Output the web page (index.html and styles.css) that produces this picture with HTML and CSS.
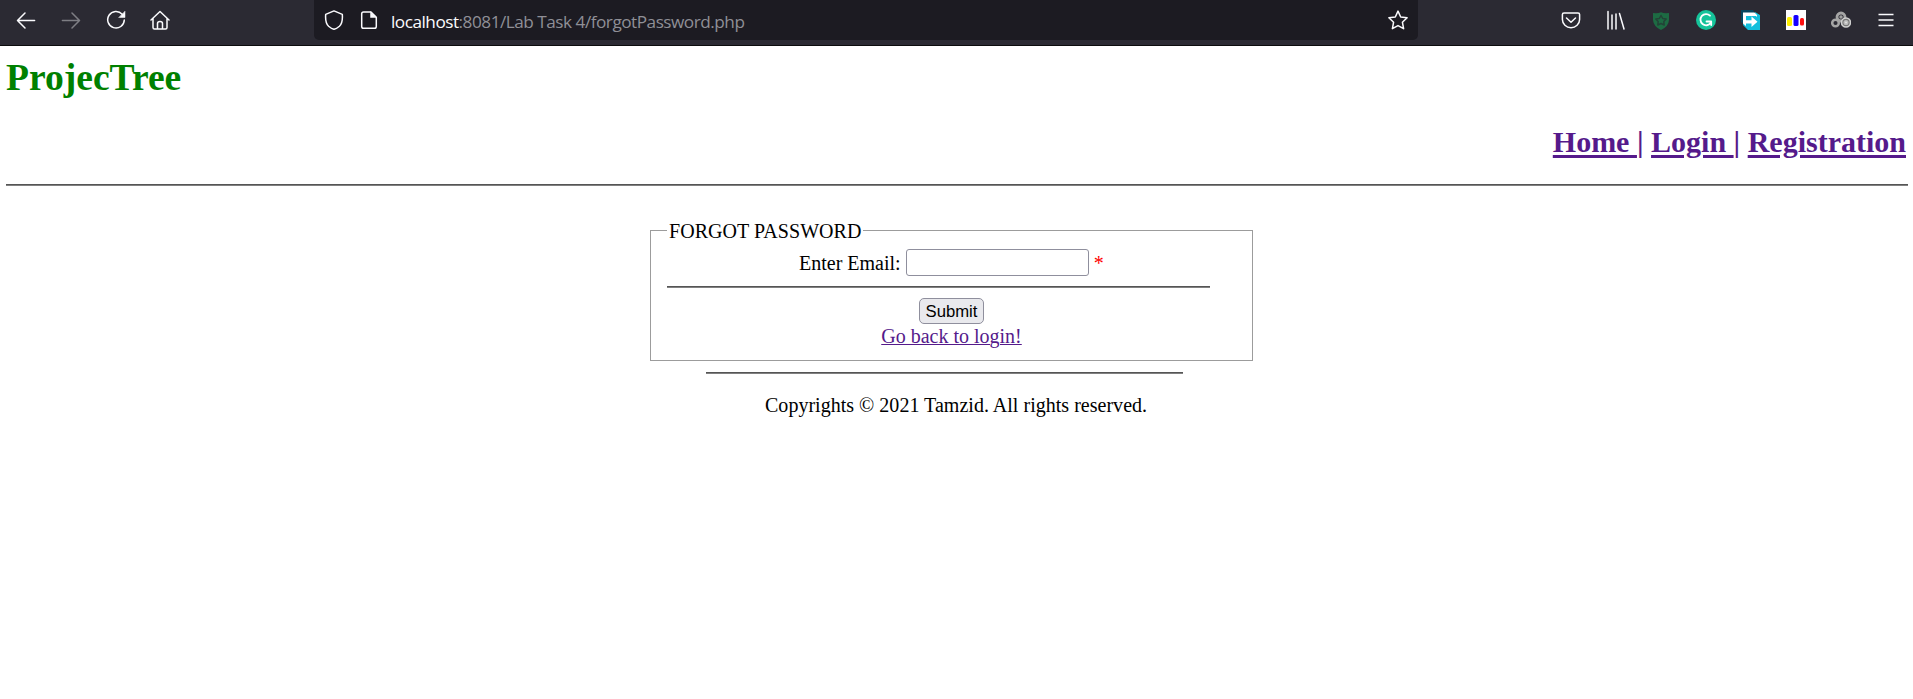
FILE: index.html
```html
<!DOCTYPE html>
<html lang="en">
<head>
<meta charset="utf-8">
<title>Forgot Password</title>
<link rel="stylesheet" href="styles.css">
</head>
<body>
<header class="toolbar">
  <div class="nav-icons">
    <svg class="icon" viewBox="0 0 20 20"><path d="M18.6 10.5H1.6M9 3L1.5 10.5L9 18"/></svg>
    <svg class="icon disabled" viewBox="0 0 20 20"><path d="M1.4 10.5H18.4M11 3L18.500 10.500L11 18"/></svg>
    <svg class="icon" viewBox="0 0 20 20"><path d="M16.200 4.200A8.300 8.300 0 1 0 18.300 10"/><path class="solid" d="M19 1.500V7.500H13Z"/></svg>
    <svg class="icon home" viewBox="0 0 20 20"><path d="M1 10L10 1.500L19 10M3 8.500V17.500Q3 19 4.500 19H15.500Q17 19 17 17.500V8.500M7.500 19V13.500Q7.500 11.500 10 11.500Q12.500 11.500 12.500 13.500V19"/></svg>
  </div>
  <div class="address">
    <svg class="icon" viewBox="0 0 20 20"><path d="M10 .9L18.300 4.400Q19 13 15.400 16.300Q12.500 18.800 10 19.300Q7.500 18.800 4.600 16.300Q1 13 1.700 4.400Z"/></svg>
    <svg class="icon page" viewBox="0 0 20 20"><path d="M4.500 2H12L17.300 7.200V16.500Q17.300 18.300 15.500 18.300H4.500Q2.700 18.300 2.700 16.500V3.800Q2.700 2 4.500 2Z"/><path class="solid" d="M11.500 2V7.500H17.300Z"/></svg>
    <div class="url"><span class="host">localhost</span>:8081/Lab Task 4/forgotPassword.php</div>
    <svg class="icon star" viewBox="0 0 20 20"><path d="M10 1.100L12.700 7L19.100 7.800L14.400 12.200L15.600 18.700L10 15.600L4.400 18.700L5.600 12.200L.9 7.800L7.300 7Z"/></svg>
  </div>
  <div class="ext-icons">
    <svg class="icon" viewBox="0 0 20 20"><path d="M3 3H17Q18.600 3 18.600 4.600V9.500A8.600 8.200 0 0 1 1.400 9.500V4.600Q1.400 3 3 3ZM5.500 8L10 12.300L14.500 8"/></svg>
    <svg class="icon" viewBox="0 0 20 20"><path d="M2 1.500V19M6 5V19M10 4V19M13.500 3.500L18 19"/></svg>
    <svg class="icon" viewBox="0 0 20 20"><path fill="#1d6b43" stroke="none" d="M2 3Q7 3.500 10 2.300Q13 3.500 18 3V10Q17.500 16.500 10 20Q2.500 16.500 2 10Z"/><path stroke="#234337" d="M10 5.500L11.700 8.500L15.200 9L12.800 11.500L13.200 15L10 13.500L6.800 15L7.200 11.500L4.800 9L8.300 8.500Z"/></svg>
    <svg class="icon" viewBox="0 0 20 20"><circle cx="10" cy="10" r="10" fill="#15c39a" stroke="none"/><path stroke="#fff" stroke-width="1.800" d="M14 5.700A5.600 5.600 0 1 0 14.600 13M10.500 11.500H15.200V15"/></svg>
    <svg class="icon" viewBox="0 0 20 20"><path fill="#06465f" stroke="none" d="M0 0H12L14 3H3V14L0 12Z"/><path fill="#12bfdc" stroke="none" d="M14 2L19 5V20H7L2 15V12H14Z"/><path fill="#fff" stroke="none" d="M2 2.500H13.500L16 5V7H5V16L2 13.500Z"/><path fill="#12bfdc" stroke="none" d="M5 6H15L18 9V17H5Z"/><path fill="#fff" stroke="none" d="M5 10.200H10.500V6.500L16.500 11.800L10.500 17V13.500H5Z"/></svg>
    <svg class="icon" viewBox="0 0 20 20"><path fill="#fff" stroke="none" d="M0 0H20V20H0Z"/><rect x="1" y="7" width="5" height="9" rx="1.500" fill="#fff000" stroke="none"/><rect x="7.500" y="5" width="5" height="11" rx="1.500" fill="#1500ff" stroke="none"/><rect x="14" y="8" width="4" height="7.500" rx="1.500" fill="#ff1010" stroke="none"/></svg>
    <svg class="icon" viewBox="0 0 20 20"><g stroke="#a5a5a5"><circle cx="10" cy="7" r="4" stroke-width="2.800"/><circle cx="10" cy="7" r="1"/><circle cx="4.500" cy="13" r="3.300" stroke-width="2.500"/></g><circle cx="15" cy="12.500" r="4.500" fill="#777" stroke="#d0d0d0" stroke-width="1.600"/><circle cx="15" cy="12.500" r="1.800" fill="#ddd" stroke="#bbb"/></svg>
    <svg class="icon menu" viewBox="0 0 20 20"><path d="M2.500 4.500H17.500M2.500 10H17.500M2.500 15.500H17.500"/></svg>
  </div>
</header>
<main class="content">
  <h1 class="brand">ProjecTree</h1>
  <nav class="links"><a href="#">Home </a><span class="bar">|</span> <a href="#">Login </a><span class="bar">|</span> <a href="#">Registration</a></nav>
  <hr class="rule">
  <fieldset class="panel">
    <legend class="legend">FORGOT PASSWORD</legend>
    <div class="field"><label for="email">Enter Email:</label><input class="email" id="email" type="text"><span class="required">*</span></div>
    <hr class="rule form-rule">
    <button class="submit">Submit</button>
    <a class="back" href="#">Go back to login!</a>
  </fieldset>
  <hr class="rule footer-rule">
  <footer class="copyright">Copyrights © 2021 Tamzid. All rights reserved.</footer>
</main>
</body>
</html>
```

FILE: styles.css
```css
* { box-sizing: border-box; }
body { margin: 0; background: #fff; color: #000; font: 20px/24px "Liberation Serif", "Times New Roman", serif; }
a { color: #551a8b; }
.toolbar { display: flex; height: 46px; background: #2b2a33; border-bottom: 1px solid #0c0c0d; }
.icon { display: block; flex: none; width: 20px; height: 20px; fill: none; stroke: #fbfbfe; stroke-width: 1.5; stroke-linejoin: round; stroke-linecap: round; }
.icon .solid { fill: #fbfbfe; stroke-width: .5; }
.disabled { opacity: .4; }
.nav-icons { display: flex; gap: 25px; width: 314px; padding: 10px 0 0 16px; }
.home { margin-left: -1px; }
.address { display: flex; width: 1104px; height: 40px; padding: 10px 10px 0; background: #1c1b22; border-radius: 0 0 5px 5px; }
.page { margin-left: 15px; }
.url { margin-left: 12px; font: 17.2px/24px "Open Sans", "Noto Sans", sans-serif; color: #8f8f96; white-space: pre; letter-spacing: -.49px; }
.host { color: #fbfbfe; }
.star { margin-left: auto; }
.ext-icons { display: flex; gap: 25px; padding: 10px 0 0 143px; }
.menu { stroke-linecap: butt; }
.content { display: flex; flex-direction: column; padding: 8px 5px 0 6px; }
.brand { margin: 0; font-size: 37.6px; line-height: 48px; color: green; }
.links { margin: 22px 2px 0 0; font-size: 30px; line-height: 36px; font-weight: bold; text-align: right; }
.links a { text-decoration-thickness: 3px; text-underline-offset: 3px; }
.bar { color: #551a8b; }
.rule { width: 100%; height: 2px; margin: 24px 0 0; border: 0; background: #808080; border-top: 1px solid #555; }
.panel { width: 603px; min-width: 0; height: 142px; margin: 33px 0 0 644px; padding: 7px 16px 0; border: 1px solid #9c9c9c; }
.legend { height: 23px; margin: 0; padding: 0 2px; line-height: 24px; letter-spacing: .05px; }
.field { display: flex; align-items: center; height: 27px; margin-left: 132px; }
.email { width: 183px; height: 27px; margin: 0 5px; border: 1px solid #8f8f9d; border-radius: 3px; }
.required { color: red; }
.form-rule { width: 543px; margin: 10px 0; }
.submit { display: block; width: 65px; height: 26px; margin: 0 auto; padding: 2px 0 0; border: 1px solid #8f8f9d; border-radius: 5px; background: #e9e9ed; color: #000; font: 16.7px/22px "Liberation Sans", Arial, sans-serif; }
.back { display: block; width: max-content; margin: 0 auto; text-decoration-thickness: 1px; }
.footer-rule { width: 477px; margin: 11px 0 0 700px; }
.copyright { margin: 19px 0 0 759px; letter-spacing: .02px; }
```
